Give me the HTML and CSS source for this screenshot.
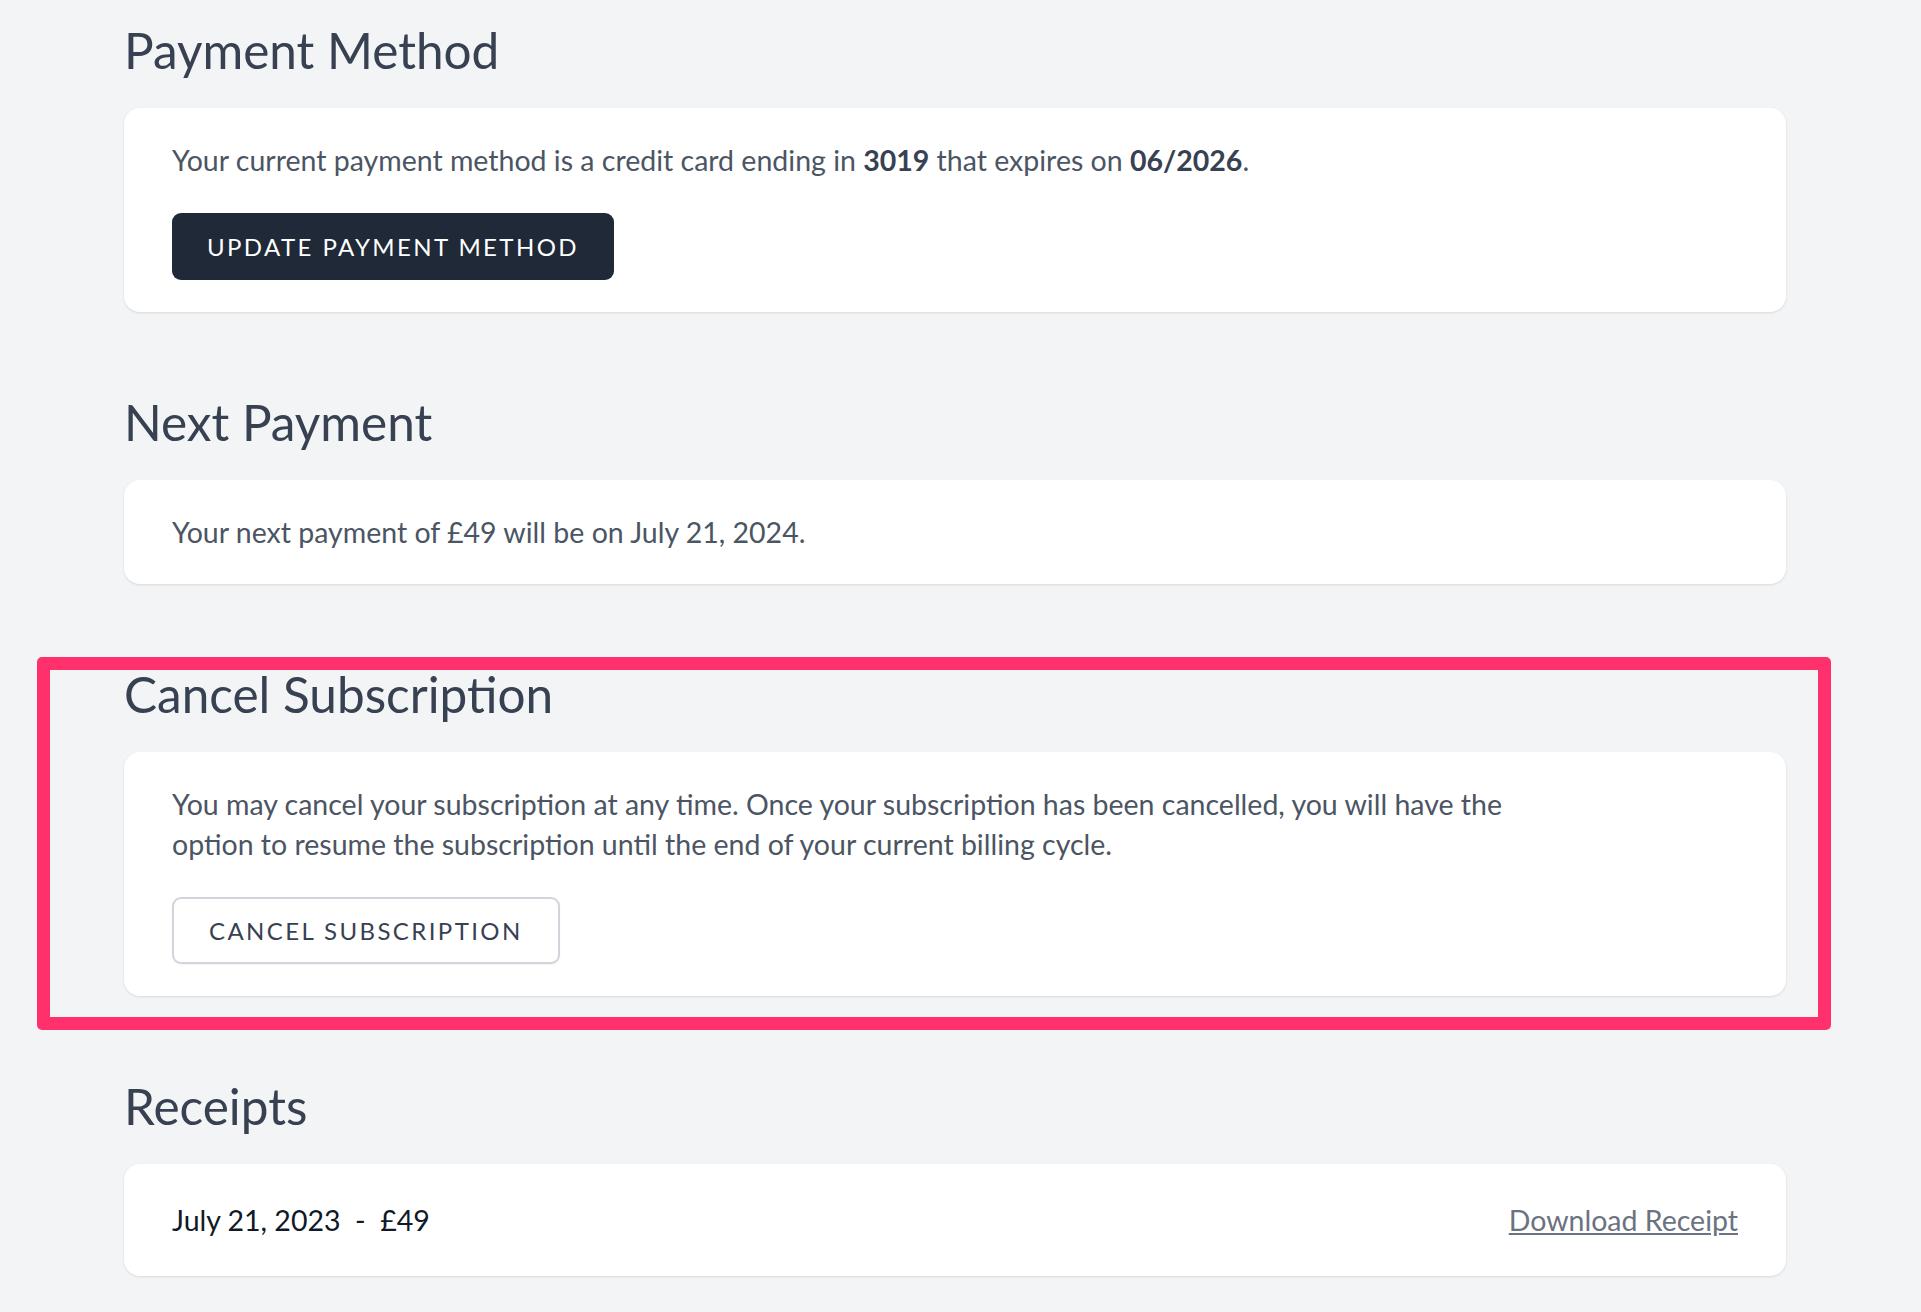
FILE: index.html
```html
<!DOCTYPE html>
<html lang="en">
<head>
  <meta charset="UTF-8">
  <title>Billing</title>
  <link rel="stylesheet" href="styles.css">
</head>
<body>

  <div class="page">

    <!-- Betaalmethode -->
    <section class="section">
      <h2>Payment Method</h2>
      <div class="card">
        <p>Your current payment method is a credit card ending in <strong>3019</strong> that expires on <strong>06/2026</strong>.</p>
        <button class="btn btn-dark">Update Payment Method</button>
      </div>
    </section>

    <section class="section">
      <h2>Next Payment</h2>
      <div class="card">
        <p>Your next payment of £49 will be on July 21, 2024.</p>
      </div>
    </section>

    <section class="section highlighted">
      <h2>Cancel Subscription</h2>
      <div class="card">
        <p class="wrap">You may cancel your subscription at any time. Once your subscription has been cancelled, you will have the option to resume the subscription until the end of your current billing cycle.</p>
        <button class="btn btn-light">Cancel Subscription</button>
      </div>
    </section>

    <section class="section">
      <h2>Receipts</h2>
      <div class="card receipt">
        <span class="receipt-date">July 21, 2023 &nbsp;-&nbsp; £49</span>
        <a href="#" class="receipt-link">Download Receipt</a>
      </div>
    </section>

  </div>

</body>
</html>
```

FILE: styles.css
```css
body {
  margin: 0;
  background-color: #f3f4f6;
  font-family: 'Lato', 'Noto Sans', sans-serif;
  color: #4b5563;
}

.page {
  width: 1662px;
  padding: 20px 0 0 124px;
}

.section {
  margin-bottom: 80px;
}

.section h2 {
  margin: 0 0 28px 0;
  font-size: 49.5px;
  line-height: 60px;
  font-weight: 400;
  color: #374151;
}

.card {
  background: #fff;
  border-radius: 16px;
  padding: 32px 48px;
  box-shadow: 0 1px 3px rgba(0,0,0,0.08), 0 1px 2px rgba(0,0,0,0.04);
}

.card p {
  margin: 0;
  font-size: 28.5px;
  line-height: 40px;
}

.card strong {
  font-weight: 700;
  color: #374151;
}

.wrap {
  max-width: 1380px;
}

.btn {
  display: block;
  margin-top: 33px;
  height: 67px;
  padding: 0 35px;
  border-radius: 9px;
  font-family: inherit;
  font-size: 24px;
  letter-spacing: 0.1em;
  text-transform: uppercase;
  cursor: pointer;
}

.btn-dark {
  background-color: #1f2937;
  color: #fff;
  border: none;
}

.btn-light {
  background-color: #fff;
  color: #374151;
  border: 2px solid #d1d5db;
  box-shadow: 0 1px 2px rgba(0,0,0,0.05);
}

/* rood kader rond de opzegsectie */
.highlighted {
  position: relative;
}

.highlighted::after {
  content: "";
  position: absolute;
  top: -7px;
  left: -87px;
  right: -45px;
  bottom: -34px;
  border: 13px solid #ff306b;
  border-radius: 5px;
  pointer-events: none;
}

.receipt {
  display: flex;
  justify-content: space-between;
  align-items: center;
  padding-top: 36px;
  padding-bottom: 36px;
  font-size: 28.5px;
  line-height: 40px;
}

.receipt-date {
  color: #111827;
}

.receipt-link {
  color: #6b7280;
  text-decoration: underline;
}
```
